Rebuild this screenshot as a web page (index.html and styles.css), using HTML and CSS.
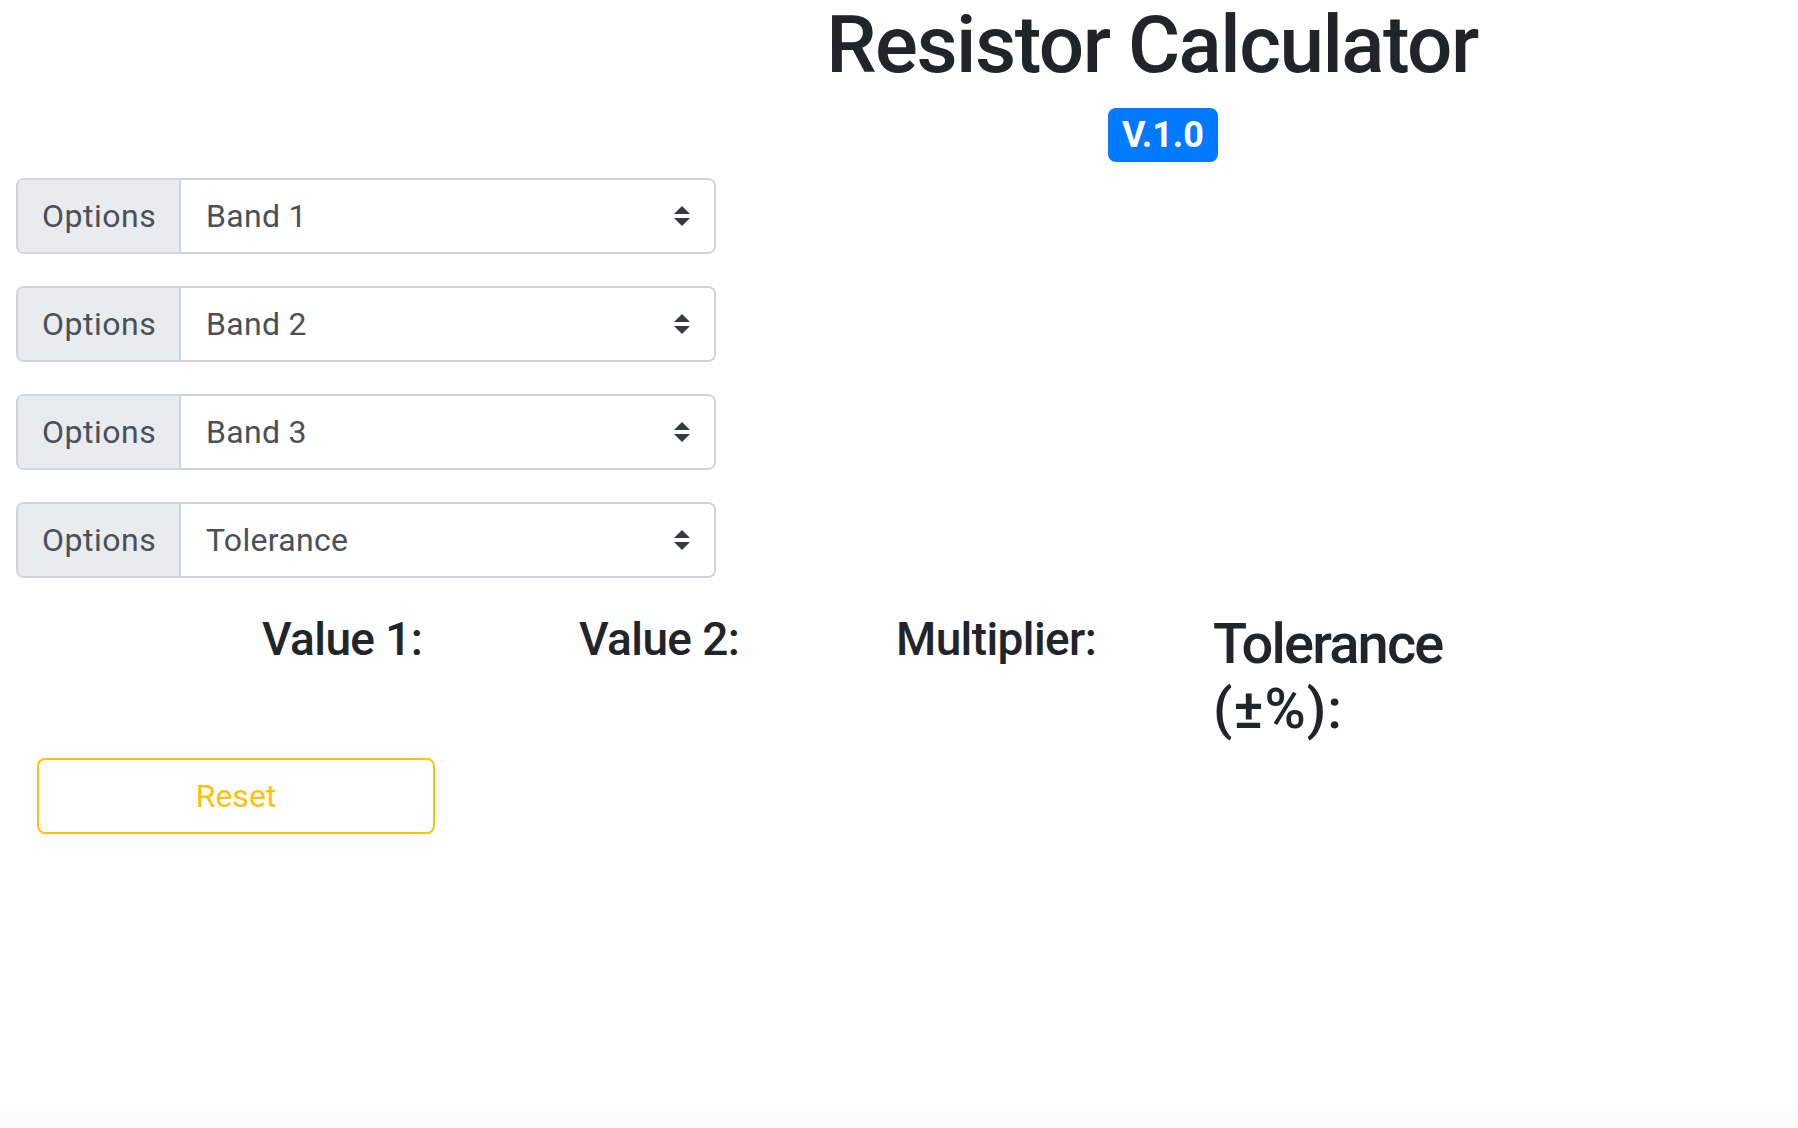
FILE: index.html
```html
<!DOCTYPE html>
<html lang="en">
<head>
<meta charset="utf-8">
<title>Resistor Calculator</title>
<link rel="stylesheet" href="styles.css">
</head>
<body>
<div class="page">
  <header class="header">
    <h1 class="title">Resistor Calculator</h1>
    <span class="badge">V.1.0</span>
  </header>
  <main class="content">
    <div class="bands">
      <div class="group">
        <span class="addon">Options</span>
        <div class="select"><span>Band 1</span><svg class="caret" viewBox="0 0 4 5" width="16" height="20"><path d="M2 0L0 2h4zm0 5L0 3h4z" fill="#343a40"/></svg></div>
      </div>
      <div class="group">
        <span class="addon">Options</span>
        <div class="select"><span>Band 2</span><svg class="caret" viewBox="0 0 4 5" width="16" height="20"><path d="M2 0L0 2h4zm0 5L0 3h4z" fill="#343a40"/></svg></div>
      </div>
      <div class="group">
        <span class="addon">Options</span>
        <div class="select"><span>Band 3</span><svg class="caret" viewBox="0 0 4 5" width="16" height="20"><path d="M2 0L0 2h4zm0 5L0 3h4z" fill="#343a40"/></svg></div>
      </div>
      <div class="group">
        <span class="addon">Options</span>
        <div class="select"><span>Tolerance</span><svg class="caret" viewBox="0 0 4 5" width="16" height="20"><path d="M2 0L0 2h4zm0 5L0 3h4z" fill="#343a40"/></svg></div>
      </div>
    </div>
    <div class="results">
      <h4 class="result">Value 1:</h4>
      <h4 class="result">Value 2:</h4>
      <h4 class="result">Multiplier:</h4>
      <h3 class="result result-lg">Tolerance <span class="pct">(±%):</span></h3>
    </div>
    <button class="reset" type="button">Reset</button>
  </main>
  <footer class="footer"></footer>
</div>
</body>
</html>
```
FILE: styles.css
```css
html, body {
  margin: 0;
  padding: 0;
}
body {
  font-family: Roboto, "Liberation Sans", sans-serif;
  color: #212529;
  background: #fff;
}
.page {
  min-height: 100vh;
  display: flex;
  flex-direction: column;
}
.header {
  display: flex;
  flex-direction: column;
  align-items: center;
  padding-left: 522px;
  padding-top: 2px;
}
.title {
  margin: 0 16px 0 0;
  font-size: 80px;
  font-weight: 500;
  line-height: 86px;
  letter-spacing: -1.5px;
}
.badge {
  margin: 20px 0 0 6px;
  background: #007bff;
  color: #fff;
  font-size: 36px;
  font-weight: 700;
  line-height: 1;
  padding: 9px 14px;
  border-radius: 8px;
}
.content {
  flex: 1;
  padding: 16px 0 0 16px;
}
.bands {
  display: flex;
  flex-direction: column;
  gap: 32px;
  width: 700px;
}
.group {
  display: flex;
  height: 76px;
  box-sizing: border-box;
  border: 2px solid #ced4da;
  border-radius: 8px;
  overflow: hidden;
  font-size: 32px;
  color: #495057;
}
.addon {
  box-sizing: border-box;
  width: 163px;
  display: flex;
  align-items: center;
  padding-left: 24px;
  background: #e9ecef;
  border-right: 2px solid #ced4da;
  letter-spacing: 0.5px;
}
.select {
  flex: 1;
  display: flex;
  align-items: center;
  padding: 0 24px 0 25px;
  background: #fff;
  letter-spacing: 0.3px;
}
.caret {
  margin-left: auto;
}
.results {
  display: flex;
  align-items: flex-start;
  margin-top: 34px;
  padding-left: 246px;
}
.result {
  box-sizing: border-box;
  flex: 0 0 317px;
  padding-right: 30px;
  margin: 0 0 16px;
  font-size: 46px;
  line-height: 55px;
  font-weight: 500;
  letter-spacing: -0.6px;
}
.result-lg {
  font-size: 56px;
  line-height: 65px;
  letter-spacing: -1.8px;
}
.pct {
  letter-spacing: 1px;
}
.reset {
  display: block;
  margin-left: 21px;
  width: 398px;
  height: 76px;
  background: transparent;
  border: 2px solid #ffc107;
  border-radius: 8px;
  color: #ffc107;
  font-family: Roboto, "Liberation Sans", sans-serif;
  font-size: 32px;
  font-weight: 400;
  padding: 0;
}
.footer {
  height: 23px;
  background: #fcfcfc;
}
```
